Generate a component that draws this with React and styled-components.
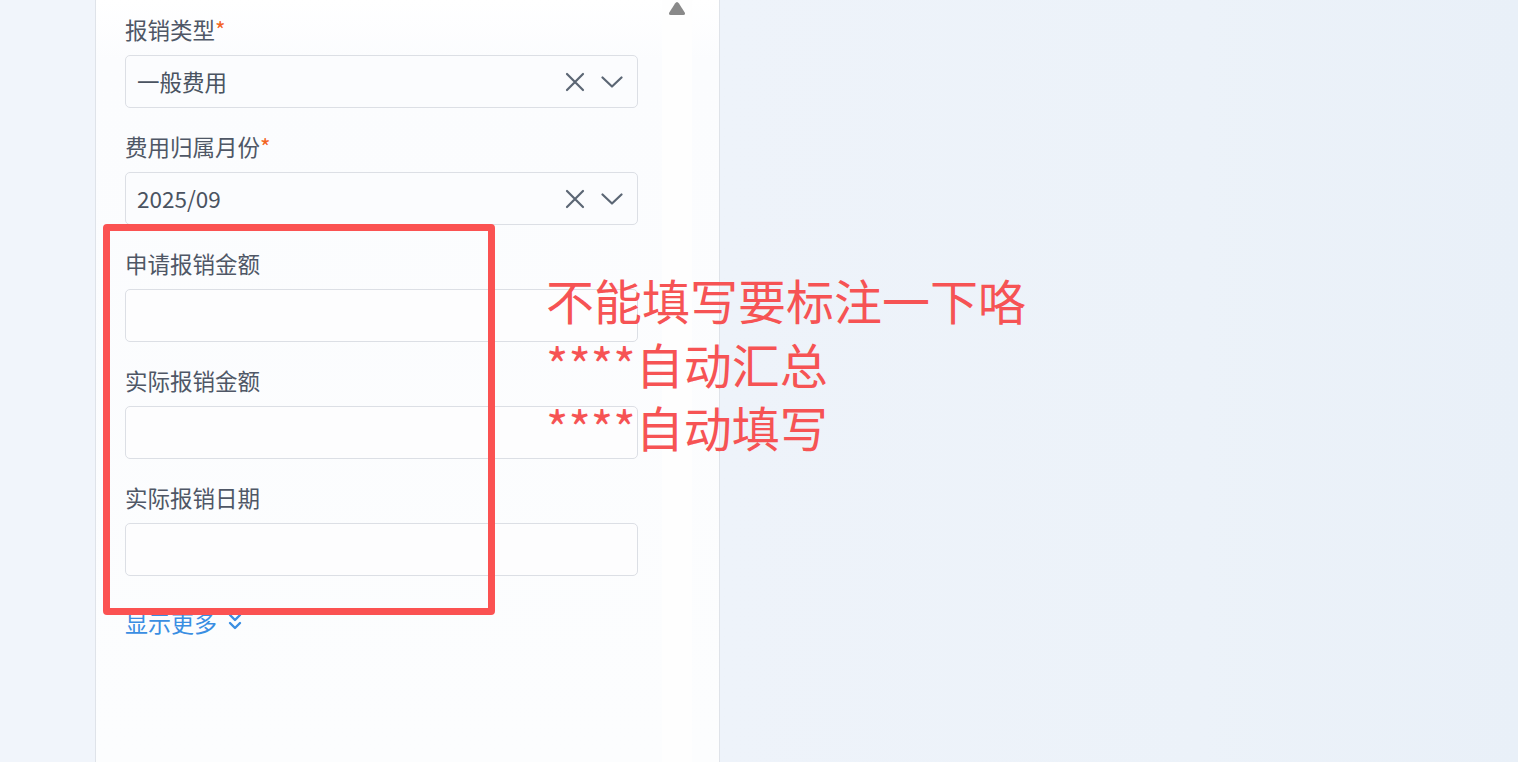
import React from 'react';
import styled, { createGlobalStyle } from 'styled-components';

const GlobalStyle = createGlobalStyle`
  html, body {
    margin: 0;
    padding: 0;
    height: 100%;
    overflow: hidden;
  }
  body {
    font-family: "Noto Sans CJK SC", "Noto Sans", sans-serif;
  }
`;

const Page = styled.div`
  position: relative;
  display: flex;
  width: 1518px;
  height: 762px;
  background: #f1f5fb;
`;

const Gutter = styled.div`
  width: 95px;
  flex-shrink: 0;
  background: #f1f5fb;
`;

const Panel = styled.div`
  width: 623px;
  flex-shrink: 0;
  display: flex;
  border-left: 1px solid #dfe3e9;
  border-right: 1px solid #dfe3e9;
  background: linear-gradient(180deg, #ffffff 0, #fbfcfe 60px, #fcfdfe 100%);
`;

const Form = styled.div`
  width: 513px;
  padding: 16px 24px 0 29px;
  display: flex;
  flex-direction: column;
`;

const Field = styled.div`
  display: flex;
  flex-direction: column;
  margin-bottom: 25px;
`;

const Label = styled.div`
  font-size: 22.5px;
  line-height: 26px;
  color: #4f5766;
  margin-bottom: 13px;
`;

const Required = styled.span`
  color: #f3641f;
`;

const InputBox = styled.div`
  box-sizing: border-box;
  height: 53px;
  border: 1px solid #dcdfe5;
  border-radius: 5px;
  background: ${(p) => (p.filled ? '#fbfcfe' : '#fdfdfe')};
  display: flex;
  align-items: center;
  padding: 0 14px 0 11px;
`;

const Value = styled.span`
  flex: 1;
  font-size: 22.5px;
  line-height: 26px;
  margin-top: -2px;
  color: #4a5361;
`;

const Icons = styled.div`
  display: flex;
  align-items: center;
  gap: 16px;
  color: #5b6674;
`;

const MoreLink = styled.div`
  display: flex;
  align-items: center;
  gap: 11px;
  margin-top: 8px;
  font-size: 23px;
  line-height: 26px;
  color: #3a8ee2;
`;

const ScrollTrack = styled.div`
  width: 30px;
  background: #fefefe;
  display: flex;
  justify-content: center;
  align-items: flex-start;
  padding-top: 1px;
`;

const Backdrop = styled.div`
  flex: 1;
  background: linear-gradient(90deg, #eef3fa 0%, #ecf2f9 60%, #e9f0f8 100%);
`;

const MarkBox = styled.div`
  position: absolute;
  left: 103px;
  top: 224px;
  width: 378px;
  height: 377px;
  border: 7px solid #fb5252;
  border-radius: 4px;
`;

const Note = styled.div`
  position: absolute;
  left: 546px;
  top: 268px;
  font-size: 48px;
  line-height: 63.5px;
  color: #f65354;
  white-space: nowrap;
`;

const ClearIcon = () => (
  <svg width="20" height="20" viewBox="0 0 20 20" fill="none" stroke="currentColor" strokeWidth="2.2" strokeLinecap="round">
    <path d="M2 2 L18 18 M18 2 L2 18" />
  </svg>
);

const ChevronIcon = () => (
  <svg width="22" height="12" viewBox="0 0 22 12" fill="none" stroke="currentColor" strokeWidth="2.2" strokeLinecap="round" strokeLinejoin="round">
    <path d="M1.5 1.5 L11 10.5 L20.5 1.5" />
  </svg>
);

const DoubleChevron = () => (
  <svg width="14" height="18" viewBox="0 0 14 18" fill="none" stroke="currentColor" strokeWidth="2.4" strokeLinecap="round" strokeLinejoin="round">
    <path d="M2 2 L7 7 L12 2 M2 10 L7 15 L12 10" />
  </svg>
);

const ScrollArrow = () => (
  <svg width="18" height="15" viewBox="0 0 18 15">
    <path d="M9 1 Q10 1 11 2.5 L17 12 Q17.5 14 15.5 14 L2.5 14 Q0.5 14 1 12 L7 2.5 Q8 1 9 1 Z" fill="#898989" />
  </svg>
);

const fields = [
  { label: '报销类型', required: true, value: '一般费用', select: true },
  { label: '费用归属月份', required: true, value: '2025/09', select: true },
  { label: '申请报销金额' },
  { label: '实际报销金额' },
  { label: '实际报销日期' },
];

export default function App() {
  return (
    <Page>
      <GlobalStyle />
      <Gutter />
      <Panel>
        <Form>
          {fields.map((f) => (
            <Field key={f.label}>
              <Label>
                {f.label}
                {f.required && <Required>*</Required>}
              </Label>
              <InputBox filled={f.select}>
                <Value>{f.value}</Value>
                {f.select && (
                  <Icons>
                    <ClearIcon />
                    <ChevronIcon />
                  </Icons>
                )}
              </InputBox>
            </Field>
          ))}
          <MoreLink>
            显示更多
            <DoubleChevron />
          </MoreLink>
        </Form>
        <ScrollTrack>
          <ScrollArrow />
        </ScrollTrack>
      </Panel>
      <Backdrop />
      <MarkBox />
      <Note>
        不能填写要标注一下咯
        <br />
        ****自动汇总
        <br />
        ****自动填写
      </Note>
    </Page>
  );
}
